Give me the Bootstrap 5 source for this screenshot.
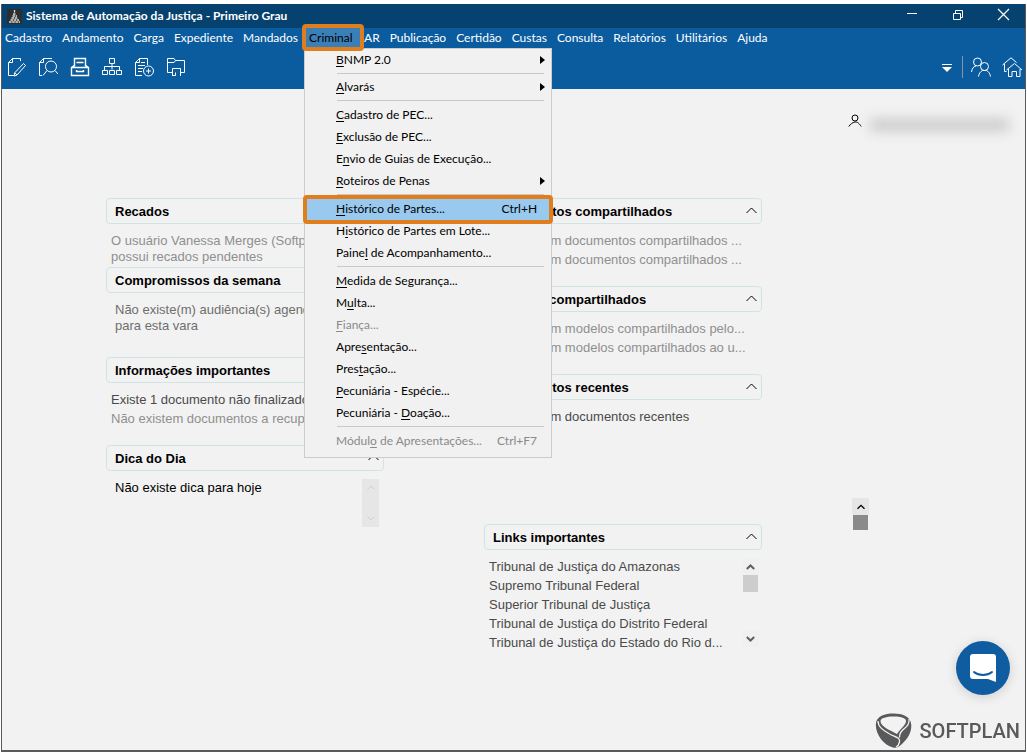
<!DOCTYPE html>
<html lang="pt-BR">
<head>
<meta charset="utf-8">
<meta name="viewport" content="width=device-width, initial-scale=1">
<title>Sistema de Automação da Justiça - Primeiro Grau</title>
<link href="https://cdn.jsdelivr.net/npm/bootstrap@5.3.0/dist/css/bootstrap.min.css" rel="stylesheet">
<style>
  :root { --ui: Lato, "Open Sans", sans-serif; --txt: "Liberation Sans", Arial, sans-serif; }
  body { background: #fff; font-family: var(--ui); font-size: 12px; line-height: 16px; color: #000; padding: 4px 1px 0; }
  svg { display: block; fill: none; stroke: currentColor; }
  button { color: inherit; }
  .plain { background: none; border: 0; padding: 0; display: flex; align-items: center; justify-content: center; }
  .window { background: #f2f2f2; border: solid #5a5a5a; border-width: 0 1px 2px; min-height: calc(100vh - 5px); }
  .titlebar { background: #06426f; height: 24px; font-weight: 700; padding-left: 5px; }
  .titlebar .plain { width: 46px; height: 20px; }
  .titlebar .plain:last-child { width: 44px; }
  .menubar { background: #0b5c9f; height: 19px; }
  .menubar > li > .plain { height: 19px; padding: 0 5px; white-space: nowrap; }
  .menubar > li:first-child > .plain { padding-left: 3px; }
  .menubar > li > .chosen { background: #3b7fb8; color: #000; height: 27px; width: 62px; margin: -4px -5px -4px -1px; border: 4px solid #e07d1c; border-radius: 4px; position: relative; z-index: 30; padding: 0 0 0 3px; justify-content: flex-start; }
  .toolbar { background: #0b5c9f; height: 42px; padding-bottom: 2px; }
  .toolbar .plain { width: 32px; height: 32px; }
  .toolbar .plain:first-child { width: 30px; }
  .toolbar .narrow { width: 28px; }
  .toolbar .narrow:last-child { width: 26px; }
  .divider { width: 1px; height: 22px; background: #8a96a3; margin: 0 4px 0 1px; }

  .submenu { display: block; top: 20px; left: 1px; width: 248px; background: #f1f1f1; border: 1px solid #ccc; border-radius: 0; padding: 0 0 5px; margin: 0; font-size: 12px; color: #000; z-index: 20; }
  .submenu .dropdown-item { display: flex; justify-content: space-between; align-items: center; height: 22px; line-height: 22px; padding: 0 14px 0 31px; color: #000; position: relative; width: 100%; }
  .submenu .more { padding-right: 6px; }
  .submenu .more::after { content: ""; border: solid transparent; border-width: 4px 0 4px 5px; border-left-color: #000; }
  .submenu .dropdown-item:disabled { color: #8a8a8a; }
  .submenu .current { background: #99c9ef; }
  .submenu .current::after { content: ""; position: absolute; inset: -3px -2px -4px; border: 4px solid #e07d1c; border-radius: 4px; z-index: 2; }
  .submenu .dropdown-divider { margin: 2px 7px 3px 32px; border-top: 1px solid #c8c8c8; opacity: 1; }
  .submenu .dropdown-item:first-child + .dropdown-divider { margin-bottom: 2px; }
  .submenu u { text-underline-offset: 2px; }

  main { font-family: var(--txt); font-size: 13px; padding: 16px 10px 0 104px; }
  .who { height: 32px; margin-bottom: 61px; }
  .hidden-name { width: 139px; height: 14px; margin: 8px 6px 0 8px; background: #cfcfcf; filter: blur(6px); }
  .column { flex: 0 1 278px; min-width: 0; }
  .pane { min-height: 88px; }
  .pane-tight { min-height: 69px; }
  .pane-roomy { min-height: 90px; }
  .pane-tall { min-height: 150px; }
  .pane h2 { font-size: 13px; line-height: 16px; font-weight: 700; margin: 0; height: 26px; padding: 1px 4px 0 8px; border: 1px solid #d0e4e5; border-radius: 4px; }
  .pane h2 svg { margin-bottom: 2px; }
  .list { line-height: 19px; padding: 7px 5px 0; white-space: nowrap; overflow: hidden; }
  .list-inset { padding-left: 9px; }
  .note { line-height: 16px; padding: 9px 9px 0; }
  .note-clip { padding: 9px 5px 0; height: 40px; overflow: hidden; }
  .dim { color: #8f8f8f; } .mid { color: #6e6e6e; } .dark { color: #4a4a4a; }
  .list a { color: #4a4a4a; text-decoration: none; display: block; }
  .scroller { width: 17px; display: flex; flex-direction: column; align-items: center; flex: none; }
  .scroller .plain { width: 17px; height: 17px; }
  .scroller-off { height: 48px; background: #e6e6e6; color: #cfcfcf; margin-right: 5px; }
  .scroller-links { height: 89px; color: #606060; margin-right: 3px; }
  .scroller-links .plain { background: #f0f0f0; }
  .scroller-page { margin: 300px 0 0 90px; }
  .scroller-page .plain { background: #e6e6e6; }
  .thumb { width: 15px; height: 17px; background: #cdcdcd; }
  .thumb-dark { height: 15px; background: #8a8a8a; }
  .column-right { margin-left: 100px; }
  .chat { position: fixed; right: 17px; bottom: 58px; width: 54px; height: 54px; border-radius: 50%; background: #0f5ca0; color: #fff; box-shadow: 0 2px 12px rgba(0,0,0,.15); }
  .brand-logo { position: fixed; right: 7px; bottom: 4px; color: #58595b; font: 500 20px/36px Roboto, sans-serif; }
</style>
</head>
<body>
<div class="window">
  <header class="text-white">
    <div class="titlebar d-flex align-items-center">
      <svg width="15" height="15" viewBox="0 0 15 15"><rect width="15" height="15" fill="#2e2e2e" stroke="none"/><path d="M7.500 1v3M6 5h3M5.500 7h4.500M4.500 9h6.500M3.500 11h8.500M2 13h11" stroke="#d8dde0" stroke-dasharray="2.500 .7" stroke-width="1.300"/></svg>
      <span class="ms-1">Sistema de Automação da Justiça - Primeiro Grau</span>
      <div class="d-flex ms-auto">
        <button class="plain" aria-label="Minimizar"><svg width="12" height="12"><path d="M1 3.500h10"/></svg></button>
        <button class="plain" aria-label="Restaurar"><svg width="12" height="12"><path d="M1.500 3.500h7v6h-7zM3.500 3V.5h7v7H9"/></svg></button>
        <button class="plain" aria-label="Fechar"><svg width="13" height="16"><path d="M1 1l11 11M12 1L1 12" stroke-width="1.200"/></svg></button>
      </div>
    </div>
    <ul class="menubar d-flex list-unstyled m-0">
      <li><button class="plain">Cadastro</button></li>
      <li><button class="plain">Andamento</button></li>
      <li><button class="plain">Carga</button></li>
      <li><button class="plain">Expediente</button></li>
      <li><button class="plain">Mandados</button></li>
      <li class="position-relative">
        <button class="plain chosen" aria-expanded="true">Criminal</button>
        <div class="submenu dropdown-menu position-absolute">
          <button class="dropdown-item more"><span><u>B</u>NMP 2.0</span></button>
          <hr class="dropdown-divider">
          <button class="dropdown-item more"><span><u>A</u>lvarás</span></button>
          <hr class="dropdown-divider">
          <button class="dropdown-item"><span><u>C</u>adastro de PEC...</span></button>
          <button class="dropdown-item"><span><u>E</u>xclusão de PEC...</span></button>
          <button class="dropdown-item"><span>E<u>n</u>vio de Guias de Execução...</span></button>
          <button class="dropdown-item more"><span><u>R</u>oteiros de Penas</span></button>
          <hr class="dropdown-divider">
          <button class="dropdown-item current"><span><u>H</u>istórico de Partes...</span><span>Ctrl+H</span></button>
          <button class="dropdown-item"><span>H<u>i</u>stórico de Partes em Lote...</span></button>
          <button class="dropdown-item"><span>Paine<u>l</u> de Acompanhamento...</span></button>
          <hr class="dropdown-divider">
          <button class="dropdown-item"><span><u>M</u>edida de Segurança...</span></button>
          <button class="dropdown-item"><span>M<u>u</u>lta...</span></button>
          <button class="dropdown-item" disabled><span><u>F</u>iança...</span></button>
          <button class="dropdown-item"><span>Apre<u>s</u>entação...</span></button>
          <button class="dropdown-item"><span>Pres<u>t</u>ação...</span></button>
          <button class="dropdown-item"><span><u>P</u>ecuniária - Espécie...</span></button>
          <button class="dropdown-item"><span>Pecuniária - <u>D</u>oação...</span></button>
          <hr class="dropdown-divider">
          <button class="dropdown-item" disabled><span>Módul<u>o</u> de Apresentações...</span><span>Ctrl+F7</span></button>
        </div>
      </li>
      <li><button class="plain">AR</button></li>
      <li><button class="plain">Publicação</button></li>
      <li><button class="plain">Certidão</button></li>
      <li><button class="plain">Custas</button></li>
      <li><button class="plain">Consulta</button></li>
      <li><button class="plain">Relatórios</button></li>
      <li><button class="plain">Utilitários</button></li>
      <li><button class="plain">Ajuda</button></li>
    </ul>
    <div class="toolbar d-flex align-items-center">
      <button class="plain" aria-label="Editar documento"><svg width="20" height="20" viewBox="0 0 20 20"><path d="M7 18.500H1.500v-13l4-4H13.500V4M5.500 1.500v4h-4M16.500 6.500l2 2-8.500 9.500-3 1 .8-3.300zM7.800 15.700l2.200 2.300"/></svg></button>
      <button class="plain" aria-label="Consultar documento"><svg width="20" height="20" viewBox="0 0 20 20"><path d="M4 18.500H1.500v-13l4-4H14M5.500 1.500v4h-4"/><circle cx="13" cy="9.500" r="5.500"/><path d="M9 13.500l-4 5M17 13.500l3 3.500"/></svg></button>
      <button class="plain" aria-label="Arquivo"><svg width="20" height="20" viewBox="0 0 20 20" stroke-width="1.400"><path d="M4.500 9.500V1.500h11v8M6.500 5.500h7M4 8.500L1.500 11M16 8.500l2.500 2.500M1.500 10.500h17v8h-17zM6.500 13v1.500h7V13"/></svg></button>
      <button class="plain" aria-label="Fluxo"><svg width="20" height="20" viewBox="0 0 20 20"><path d="M7.500 1.500h5v5h-5zM10 6.500v6M2.500 13V9.500h15V13M.5 13.500h5v4h-5zM7.500 13.500h5v4h-5zM14.500 13.500h5v4h-5z"/></svg></button>
      <button class="plain" aria-label="Adicionar documento"><svg width="20" height="20" viewBox="0 0 20 20"><path d="M8 18.500H1.500v-13l4-4h8V8M5.500 1.500v4h-4M7 5.500h4M4 8.500h7M4 11.500h5M4 14.500h4"/><circle cx="14.500" cy="14" r="5"/><path d="M14.500 11.500v5M12 14h5"/></svg></button>
      <button class="plain" aria-label="Pasta"><svg width="20" height="20" viewBox="0 0 20 20"><path d="M6 15.500H1.500v-14h6.500l1.500 2h9v12H15M1.500 5.500h6.500l1.500-2M6.500 19v-7.500h8V19M6.500 18.500h3v-3"/></svg></button>
      <button class="plain narrow ms-auto" aria-label="Mais opções"><svg width="10" height="9"><path d="M0 1.500h10"/><path d="M0 4h10L5 9z" fill="currentColor" stroke="none"/></svg></button>
      <div class="divider"></div>
      <button class="plain narrow" aria-label="Usuários"><svg width="20" height="20" viewBox="0 0 20 20"><circle cx="6.500" cy="5" r="4"/><circle cx="13.500" cy="9.500" r="4"/><path d="M.5 15C1 11.500 2.500 9.500 5 9M7.500 19.500c.5-3 2-5 4-6h4c2 1 3.500 3 4 6"/></svg></button>
      <button class="plain narrow ms-1" aria-label="Início"><svg width="20" height="20" viewBox="0 0 20 20"><path d="M.5 8L9 .8 14.500 5.500M2.500 7v7.500h2M4.500 13l8-6.500 7.500 6.500M6.500 12v7.500h3.500v-5h4.500v5h3.500V12"/></svg></button>
    </div>
  </header>

  <main>
    <div class="who d-flex align-items-center justify-content-end">
      <svg width="14" height="14" viewBox="0 0 14 14"><circle cx="7" cy="4" r="3"/><path d="M.8 12.500C2.500 10 4.500 8.500 7 8s4.500 2 6.200 4.500"/></svg>
      <div class="hidden-name"></div>
    </div>
    <div class="d-flex align-items-start">
      <div class="column">
        <section class="pane pane-tight">
          <h2 class="d-flex align-items-center">Recados</h2>
          <div class="note note-clip dim">O usuário Vanessa Merges (Softplan) não possui recados pendentes</div>
        </section>
        <section class="pane pane-roomy">
          <h2 class="d-flex align-items-center">Compromissos da semana</h2>
          <div class="note mid">Não existe(m) audiência(s) agendada(s) para esta vara</div>
        </section>
        <section class="pane">
          <h2 class="d-flex align-items-center">Informações importantes</h2>
          <div class="list"><div class="dark">Existe 1 documento não finalizado</div><div class="dim">Não existem documentos a recuperar</div></div>
        </section>
        <section class="pane">
          <h2 class="d-flex align-items-center justify-content-between">Dica do Dia <svg width="11" height="7"><path d="M.5 6l5-5 5 5"/></svg></h2>
          <div class="d-flex justify-content-between">
            <div class="list list-inset">Não existe dica para hoje</div>
            <div class="scroller scroller-off justify-content-between mt-2">
              <button class="plain" aria-label="Subir"><svg width="8" height="5"><path d="M.5 4.500l3.500-3.500 3.500 3.500"/></svg></button>
              <button class="plain" aria-label="Descer"><svg width="8" height="5"><path d="M.5 .5L4 4 7.500 .5"/></svg></button>
            </div>
          </div>
        </section>
      </div>
      <div class="column column-right">
        <section class="pane">
          <h2 class="d-flex align-items-center justify-content-between">Documentos compartilhados <svg width="11" height="7"><path d="M.5 6l5-5 5 5"/></svg></h2>
          <div class="list dim"><div>Não existem documentos compartilhados ...</div><div>Não existem documentos compartilhados ...</div></div>
        </section>
        <section class="pane">
          <h2 class="d-flex align-items-center justify-content-between">Modelos compartilhados <svg width="11" height="7"><path d="M.5 6l5-5 5 5"/></svg></h2>
          <div class="list dim"><div>Não existem modelos compartilhados pelo...</div><div>Não existem modelos compartilhados ao u...</div></div>
        </section>
        <section class="pane pane-tall">
          <h2 class="d-flex align-items-center justify-content-between">Documentos recentes <svg width="11" height="7"><path d="M.5 6l5-5 5 5"/></svg></h2>
          <div class="list dark">Não existem documentos recentes</div>
        </section>
        <section class="pane">
          <h2 class="d-flex align-items-center justify-content-between">Links importantes <svg width="11" height="7"><path d="M.5 6l5-5 5 5"/></svg></h2>
          <div class="d-flex justify-content-between">
            <div class="list">
              <a href="#">Tribunal de Justiça do Amazonas</a>
              <a href="#">Supremo Tribunal Federal</a>
              <a href="#">Superior Tribunal de Justiça</a>
              <a href="#">Tribunal de Justiça do Distrito Federal</a>
              <a href="#">Tribunal de Justiça do Estado do Rio d...</a>
            </div>
            <div class="scroller scroller-links mt-2">
              <button class="plain" aria-label="Subir"><svg width="9" height="6" stroke-width="2"><path d="M.8 5l3.700-3.500L8.200 5"/></svg></button>
              <div class="thumb"></div>
              <button class="plain mt-auto" aria-label="Descer"><svg width="9" height="6" stroke-width="2"><path d="M.8 1l3.700 3.500L8.200 1"/></svg></button>
            </div>
          </div>
        </section>
      </div>
      <div class="scroller scroller-page">
        <button class="plain" aria-label="Subir"><svg width="8" height="6" stroke-width="1.300"><path d="M.5 4.800l3.500-3.500 3.500 3.500"/></svg></button>
        <div class="thumb thumb-dark"></div>
      </div>
    </div>
  </main>
</div>

<button class="chat plain" aria-label="Abrir conversa"><svg width="28" height="30" viewBox="0 0 28 30"><path d="M4 1h20a3 3 0 0 1 3 3v25l-8-3H4a3 3 0 0 1-3-3V4a3 3 0 0 1 3-3z" fill="#fff" stroke="none"/><path d="M5 19c5 4 13 4 18 0" stroke="#0f5ca0" stroke-width="2" stroke-linecap="round"/></svg></button>
<div class="brand-logo d-flex align-items-center">
  <svg width="37" height="36" viewBox="0 0 37 36"><path d="M18.500 .5C27 .5 36 3 36.300 12c.2 8-4 14-9.300 19-3 3-5.500 4.200-9 3.500C9 32.500 .8 22 .8 11.500 1 3 10 .5 18.500 .5z" fill="#58595b" stroke="none"/><path d="M18.500 3.500c8 0 13 1.500 12.500 5-.5 4-5.500 7-9 12.500C16 17.500 5.500 14 5.500 8c0-3 6-4.500 13-4.500z" fill="#f2f2f2" stroke="none"/><path d="M3 8c0 7 7 10 12.500 13.500C20 24 25.500 24.500 24.500 29c-.4 2-1.500 4-3.500 5M34 6c1 7-5 9-8 13-1.500 2-1.500 3.500-1.500 5.500" stroke="#f2f2f2" stroke-width="1.300"/></svg>
  <span class="ms-2">SOFTPLAN</span>
</div>
<script src="https://cdn.jsdelivr.net/npm/bootstrap@5.3.0/dist/js/bootstrap.bundle.min.js"></script>
</body>
</html>
